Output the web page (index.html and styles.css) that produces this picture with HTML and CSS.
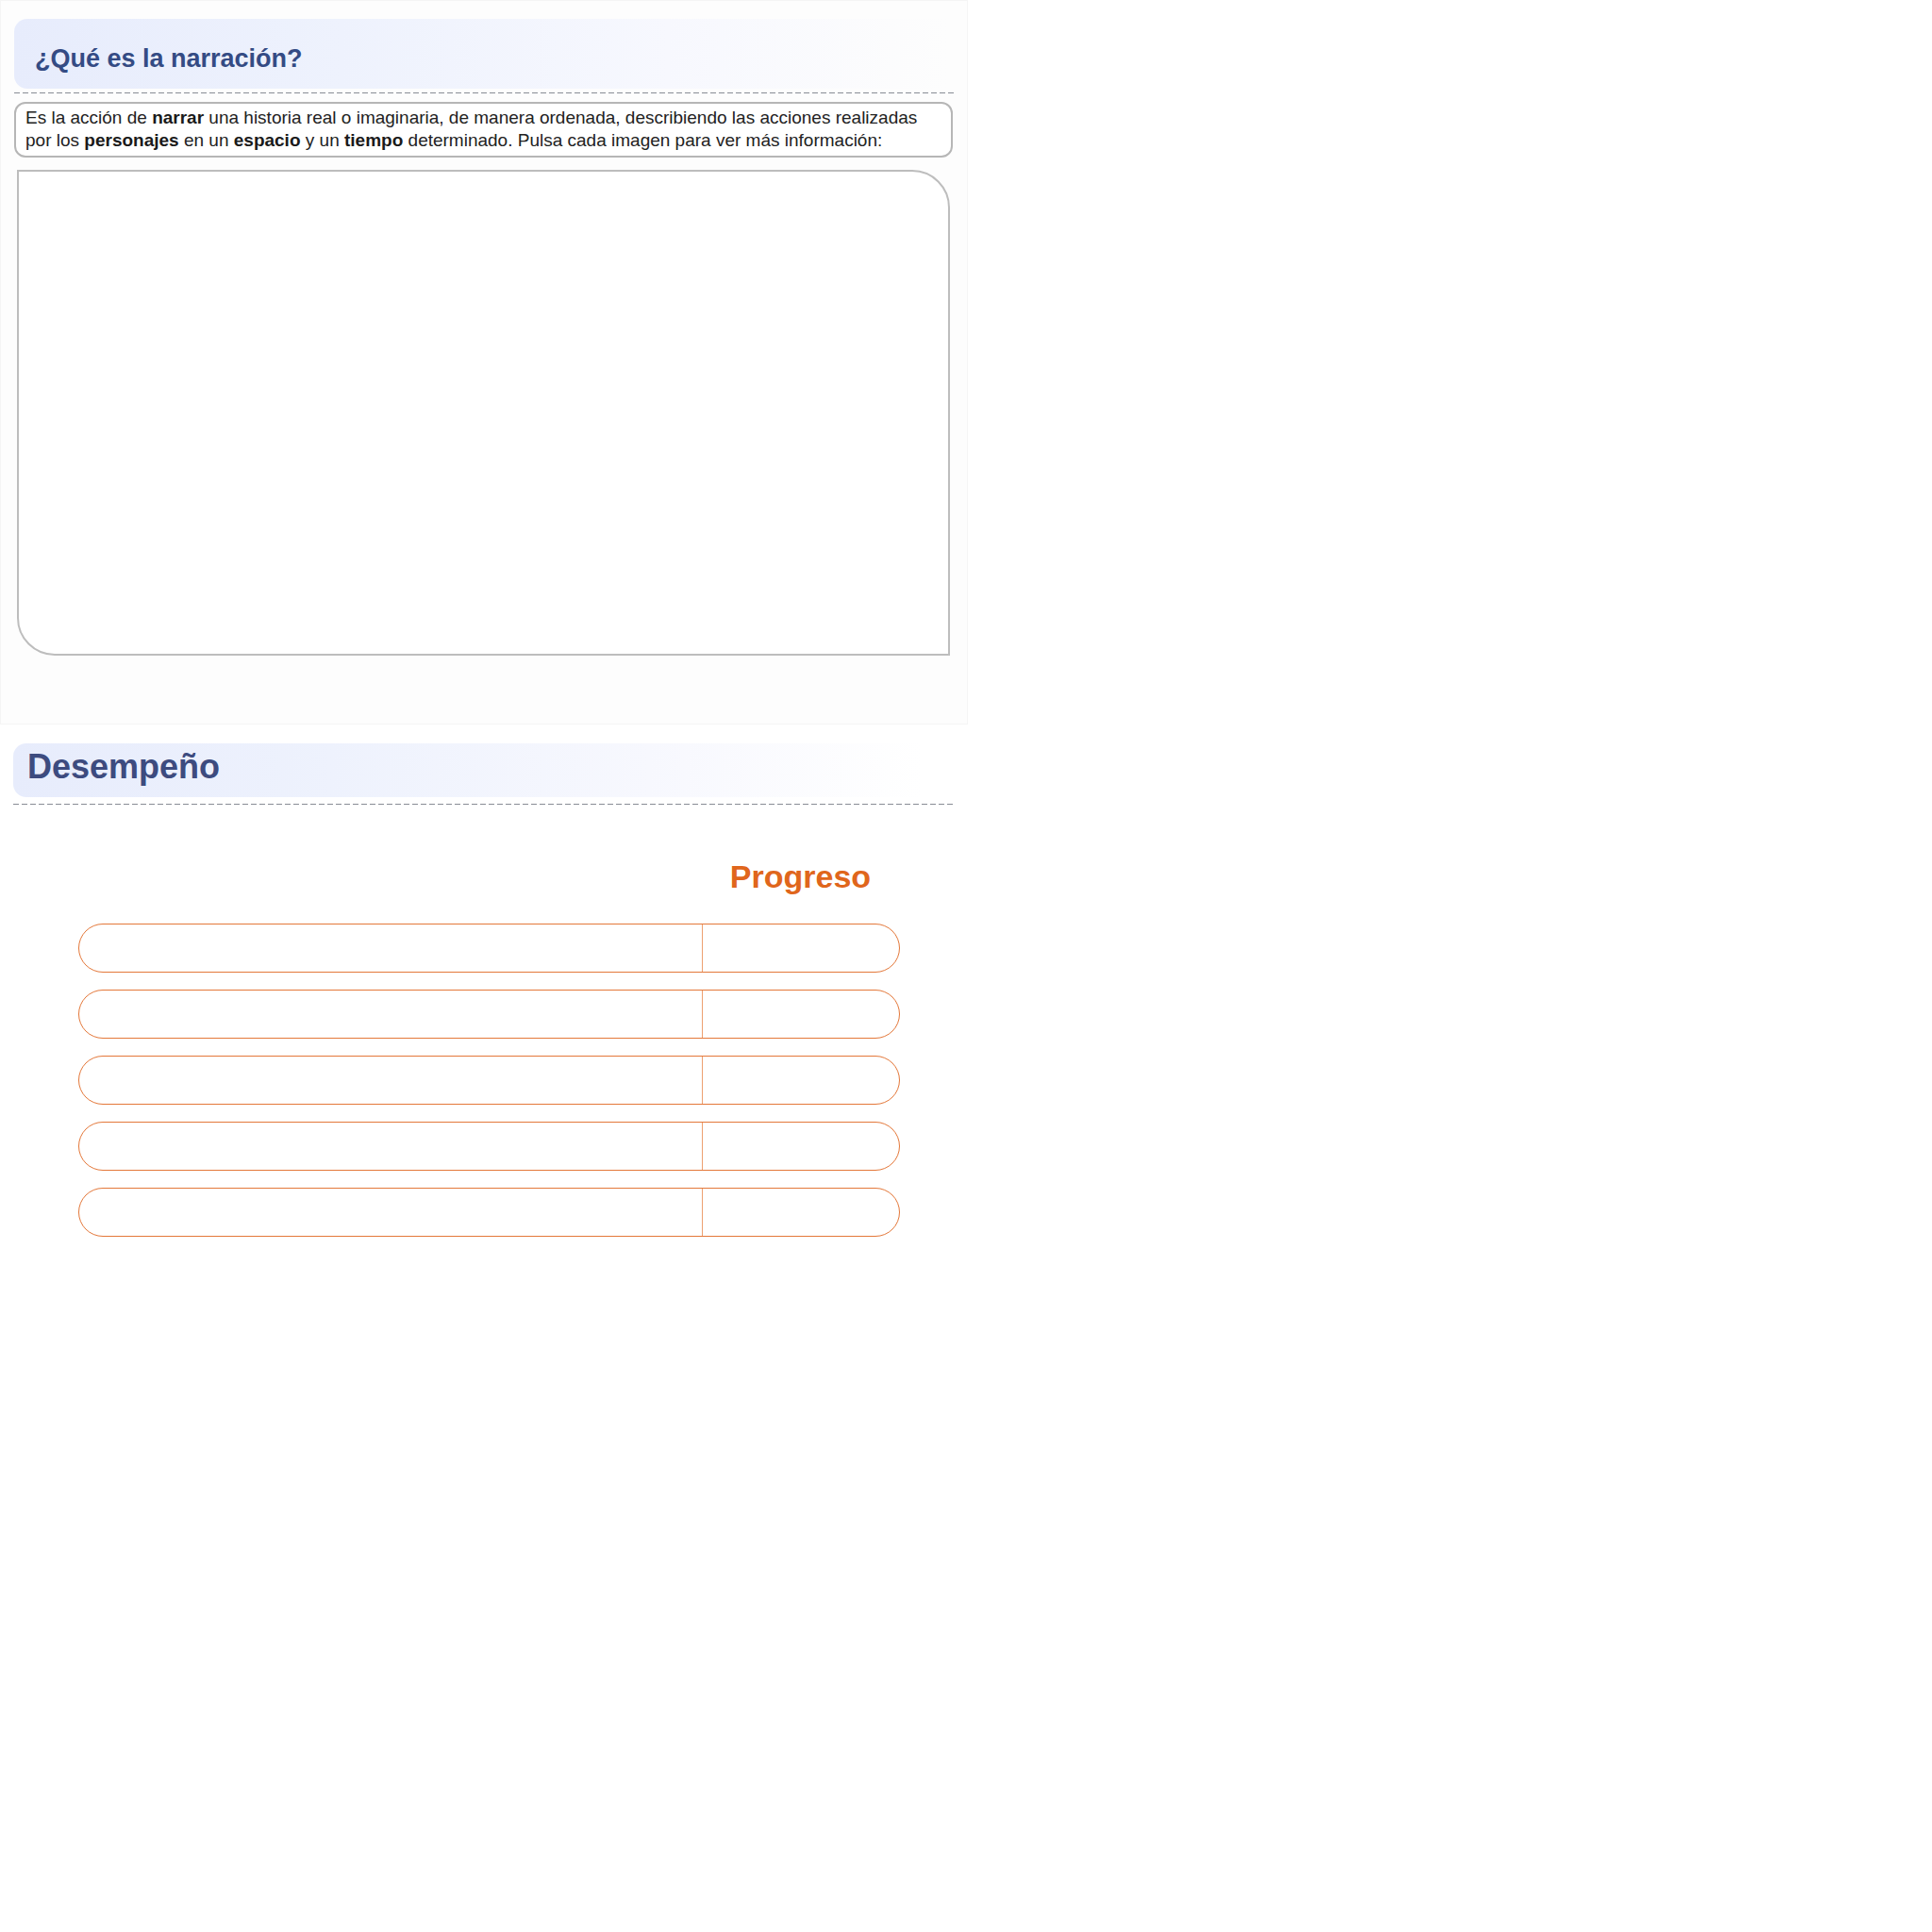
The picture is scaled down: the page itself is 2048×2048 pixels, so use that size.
FILE: index.html
```html
<!DOCTYPE html>
<html lang="es">
<head>
<meta charset="utf-8">
<title>¿Qué es la narración?</title>
<link rel="stylesheet" href="styles.css">
</head>
<body>
<section class="card">
  <div class="head"><h2 class="head-title">¿Qué es la narración?</h2></div>
  <div class="dash"></div>
  <p class="intro">Es la acción de <b>narrar</b> una historia real o imaginaria, de manera ordenada, describiendo las acciones realizadas<br>por los <b>personajes</b> en un <b>espacio</b> y un <b>tiempo</b> determinado. Pulsa cada imagen para ver más información:</p>
  <div class="stage"></div>
</section>
<section class="perf">
  <div class="head head-big"><h2 class="head-title big">Desempeño</h2></div>
  <div class="dash dash-wide"></div>
  <div class="table">
    <div class="table-head"><span></span><span class="prog">Progreso</span></div>
    <div class="row"><div class="cell-a"></div><div class="cell-b"></div></div>
    <div class="row"><div class="cell-a"></div><div class="cell-b"></div></div>
    <div class="row"><div class="cell-a"></div><div class="cell-b"></div></div>
    <div class="row"><div class="cell-a"></div><div class="cell-b"></div></div>
    <div class="row"><div class="cell-a"></div><div class="cell-b"></div></div>
  </div>
</section>
</body>
</html>
```
FILE: styles.css
```css
* { box-sizing: border-box; }
html, body { margin: 0; padding: 0; background: #ffffff; }
body { font-family: "Liberation Sans", Arial, sans-serif; color: #222; }

.card {
  width: 1026px;
  height: 768px;
  padding: 19px 14px 0 14px;
  background: #fdfdfd;
  border: 1px solid #f5f5f5;
}
.head {
  width: 990px;
  padding: 26px 0 16px 22px;
  border-radius: 14px 0 0 14px;
  background: linear-gradient(to right, #e7ecfc 0%, #eef2fd 35%, #f7f8fe 70%, rgba(255,255,255,0) 100%);
}
.head-title {
  margin: 0;
  font-size: 27px;
  line-height: 32px;
  font-weight: bold;
  color: #344b84;
}
.dash {
  width: 998px;
  height: 1px;
  margin-top: 4px;
  background-image: repeating-linear-gradient(to right, #888c95 0 6px, transparent 6px 9px);
}
.intro {
  width: 995px;
  margin: 9px 0 0 0;
  padding: 3px 8px 0 10px;
  height: 59px;
  border: 2px solid #b6b6b6;
  border-radius: 12px;
  font-size: 19px;
  line-height: 24px;
  color: #222;
  background: #ffffff;
}
.intro b { color: #1a1a1a; }
.stage {
  width: 989px;
  height: 515px;
  margin: 13px 0 0 3px;
  border: 2px solid #bdbdbd;
  border-radius: 0 40px 0 40px;
  background: #ffffff;
}

.perf { padding: 20px 14px 0 14px; width: 1026px; }
.head-big { width: 963px; padding: 5px 0 12px 15px; }
.big { font-size: 36px; line-height: 40px; color: #3d4b7f; }
.dash-wide { margin-top: 7px; }

.table { margin: 57px 0 0 69px; width: 871px; }
.table-head {
  display: grid;
  grid-template-columns: 660px 211px;
  margin-bottom: 31px;
}
.prog {
  text-align: center;
  font-size: 34px;
  line-height: 38px;
  font-weight: bold;
  color: #e0661c;
}
.row {
  display: grid;
  grid-template-columns: 660px 1fr;
  height: 52px;
  margin-bottom: 18px;
  border: 1.5px solid #e4783a;
  border-radius: 26px;
}
.cell-b { border-left: 1.5px solid #eda070; }
```
